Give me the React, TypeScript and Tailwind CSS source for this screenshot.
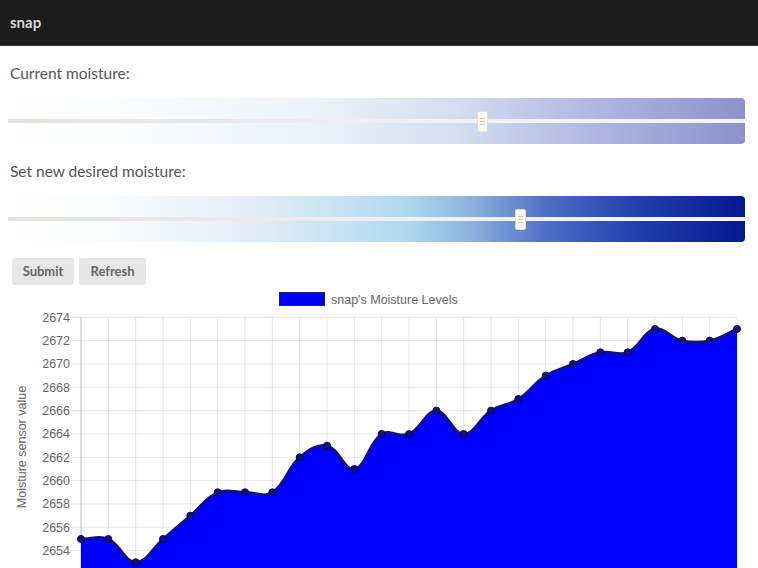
import React from "react";

const values = [
  2655, 2655, 2653, 2655, 2657, 2659, 2659, 2659, 2662, 2663, 2661, 2664, 2664,
  2666, 2664, 2666, 2667, 2669, 2670, 2671, 2671, 2673, 2672, 2672, 2673,
];

const X0 = 81;
const X1 = 737;
const TOP = 30.3;
const STEP = 11.667; // px per unit

type Pt = { x: number; y: number };

function yOf(v: number) {
  return TOP + (2674 - v) * STEP;
}

function buildPath(pts: Pt[], t = 0.4) {
  const cps = pts.map((cur, i) => {
    const prev = pts[i - 1] || cur;
    const next = pts[i + 1] || cur;
    const d01 = Math.hypot(cur.x - prev.x, cur.y - prev.y);
    const d12 = Math.hypot(next.x - cur.x, next.y - cur.y);
    let s01 = d01 / (d01 + d12);
    let s12 = d12 / (d01 + d12);
    if (isNaN(s01)) s01 = 0;
    if (isNaN(s12)) s12 = 0;
    const fa = t * s01;
    const fb = t * s12;
    return {
      prev: { x: cur.x - fa * (next.x - prev.x), y: cur.y - fa * (next.y - prev.y) },
      next: { x: cur.x + fb * (next.x - prev.x), y: cur.y + fb * (next.y - prev.y) },
    };
  });
  let d = `M${pts[0].x},${pts[0].y}`;
  for (let i = 1; i < pts.length; i++) {
    const a = cps[i - 1].next;
    const b = cps[i].prev;
    d += ` C${a.x},${a.y} ${b.x},${b.y} ${pts[i].x},${pts[i].y}`;
  }
  return d;
}

function Slider({ pos, gradient }: { pos: number; gradient: string }) {
  return (
    <div className={`relative h-[46px] rounded-[4px] ${gradient}`}>
      <div className="absolute left-0 right-0 top-[21px] h-[4px] bg-[linear-gradient(to_right,#e6e1dc,#eeeef4_50%,#f4f4fa)]" />
      <div
        className="absolute top-[13px] w-[11px] h-[21px] rounded-[2px] bg-[#fbfaf4] border border-[#e4e0d6] flex flex-col items-center justify-center gap-[2px]"
        style={{ left: pos }}
      >
        <div className="w-[5px] h-px bg-[#d9c9b0]" />
        <div className="w-[5px] h-px bg-[#d9c9b0]" />
        <div className="w-[5px] h-px bg-[#d9c9b0]" />
      </div>
    </div>
  );
}

function Chart() {
  const pts = values.map((v, i) => ({ x: X0 + ((X1 - X0) / 24) * i, y: yOf(v) }));
  const line = buildPath(pts);
  const area = `${line} L${X1},300 L${X0},300 Z`;
  const ticks = [2674, 2672, 2670, 2668, 2666, 2664, 2662, 2660, 2658, 2656, 2654, 2652];
  return (
    <svg width={758} height={290} className="block" style={{ fontFamily: '"Liberation Sans", Arial, sans-serif' }}>
      <rect x={279.5} y={5.5} width={45} height={13} fill="#0000ff" stroke="#1a1a80" strokeWidth={1} />
      <text x={331} y={16.5} fontSize={12.5} fill="#666">
        snap's Moisture Levels
      </text>
      {ticks.map((t) => (
        <g key={t}>
          <line x1={71} x2={X1} y1={yOf(t)} y2={yOf(t)} stroke="rgba(0,0,0,0.1)" />
          {t > 2653 && (
            <text x={70} y={yOf(t) + 4.5} fontSize={12.5} fill="#666" textAnchor="end">
              {t}
            </text>
          )}
        </g>
      ))}
      {pts.map((p, i) => (
        <line key={i} x1={p.x} x2={p.x} y1={TOP} y2={300} stroke={i === 0 ? "rgba(0,0,0,0.25)" : "rgba(0,0,0,0.1)"} />
      ))}
      <text
        x={0}
        y={0}
        fontSize={12.5}
        fill="#666"
        textAnchor="middle"
        transform={`translate(26,${446 - 286}) rotate(-90)`}
      >
        Moisture sensor value
      </text>
      <path d={area} fill="#0000ff" />
      <path d={line} fill="none" stroke="#14146e" strokeWidth={2.5} />
      {pts.map((p, i) => (
        <circle key={i} cx={p.x} cy={p.y} r={3.5} fill="#101080" stroke="#0a0a50" strokeWidth={1} />
      ))}
    </svg>
  );
}

export default function App() {
  return (
    <div className="w-[758px] h-[568px] overflow-hidden bg-white font-['Lato','Liberation_Sans',sans-serif]">
      <div className="h-[46px] bg-[#1c1c1c] border-b border-[#3a3a3a] flex items-center px-[10px]">
        <span className="text-[15px] font-bold text-[#d6d6d6]">snap</span>
      </div>

      <div className="pl-[8px] pr-[13px]">
        <div className="pt-[17px] pb-[15px] px-[2px] text-[15.5px] leading-[20px] text-[#555]">Current moisture:</div>
        <Slider
          pos={469}
          gradient="bg-[linear-gradient(to_right,#ffffff_0%,#fbfdfe_15%,#eaf4fa_40%,#d4e0f0_60%,#aeb6e0_80%,#8b92cd_100%)]"
        />

        <div className="pt-[17px] pb-[15px] px-[2px] text-[15.5px] leading-[20px] text-[#555]">Set new desired moisture:</div>
        <Slider
          pos={507}
          gradient="bg-[linear-gradient(to_right,#ffffff_0%,#fafcfd_14%,#dcebf5_36%,#afd9ef_54%,#8cb0dc_63%,#4f6fc6_73%,#2440ac_85%,#041890_100%)]"
        />

        <div className="flex gap-[5px] pt-[16px] px-[4px]">
          <button className="h-[27px] w-[62px] rounded-[3px] bg-[#e6e6e6] text-[13px] font-bold text-[#666]">Submit</button>
          <button className="h-[27px] w-[67px] rounded-[3px] bg-[#e6e6e6] text-[13px] font-bold text-[#666]">Refresh</button>
        </div>
      </div>

      <div className="mt-[2px]">
        <Chart />
      </div>
    </div>
  );
}
